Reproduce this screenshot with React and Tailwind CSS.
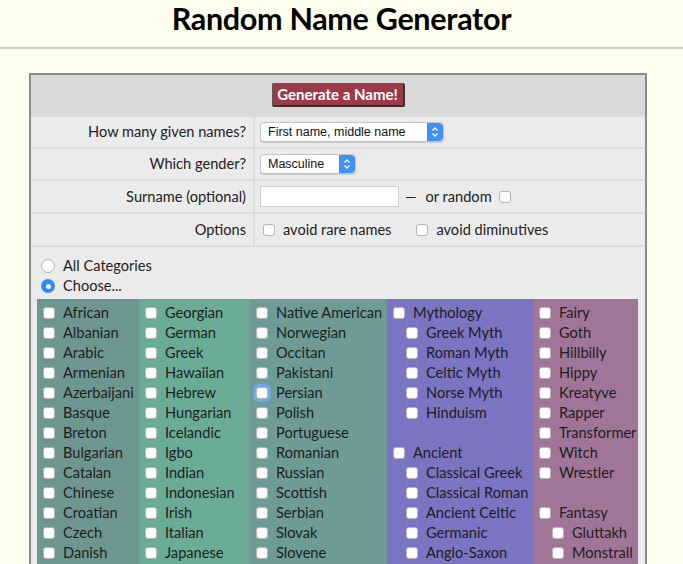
import React from 'react';

const COLUMNS = [
  {
    bg: 'bg-[#6d9691]',
    w: 'w-[102px]',
    items: ['African', 'Albanian', 'Arabic', 'Armenian', 'Azerbaijani', 'Basque', 'Breton', 'Bulgarian', 'Catalan', 'Chinese', 'Croatian', 'Czech', 'Danish'],
  },
  {
    bg: 'bg-[#6aab96]',
    w: 'w-[111px]',
    items: ['Georgian', 'German', 'Greek', 'Hawaiian', 'Hebrew', 'Hungarian', 'Icelandic', 'Igbo', 'Indian', 'Indonesian', 'Irish', 'Italian', 'Japanese'],
  },
  {
    bg: 'bg-[#6f9b97]',
    w: 'w-[137px]',
    items: ['Native American', 'Norwegian', 'Occitan', 'Pakistani', '*Persian', 'Polish', 'Portuguese', 'Romanian', 'Russian', 'Scottish', 'Serbian', 'Slovak', 'Slovene'],
  },
  {
    bg: 'bg-[#7a74c2]',
    w: 'w-[146px]',
    items: ['Mythology', '>Greek Myth', '>Roman Myth', '>Celtic Myth', '>Norse Myth', '>Hinduism', '', 'Ancient', '>Classical Greek', '>Classical Roman', '>Ancient Celtic', '>Germanic', '>Anglo-Saxon'],
  },
  {
    bg: 'bg-[#a07598]',
    w: 'w-[105px]',
    items: ['Fairy', 'Goth', 'Hillbilly', 'Hippy', 'Kreatyve', 'Rapper', 'Transformer', 'Witch', 'Wrestler', '', 'Fantasy', '>Gluttakh', '>Monstrall'],
  },
];

function Box({ focus }) {
  return (
    <span
      className={`inline-block shrink-0 w-[12px] h-[12px] rounded-[3px] bg-white border border-[#b5b5b5] ${
        focus ? 'ring-[3px] ring-[#6fa9e6]' : ''
      }`}
    />
  );
}

function Select({ label, w }) {
  return (
    <div className={`${w} h-[20px] flex items-center bg-white rounded-[4px] border border-[#c4c4c4] shadow-[0_1px_1px_rgba(0,0,0,0.15)] overflow-hidden`}>
      <span className="flex-1 pl-[7px] text-[12.5px] text-[#111] font-['Liberation_Sans',sans-serif]">{label}</span>
      <span className="w-[16px] h-full bg-[#3f8ff5] flex items-center justify-center rounded-r-[4px]">
        <svg width="8" height="12" viewBox="0 0 8 12" fill="none" stroke="white" strokeWidth="1.4">
          <path d="M1.5 4.5 L4 2 L6.5 4.5" />
          <path d="M1.5 7.5 L4 10 L6.5 7.5" />
        </svg>
      </span>
    </div>
  );
}

function Row({ label, h = 'h-[30px]', children }) {
  return (
    <div className={`flex gap-[2px] ${h}`}>
      <div className="w-[222px] bg-[#ebebeb] flex items-center justify-end pr-[7px]">{label}</div>
      <div className="flex-1 bg-[#ebebeb] flex items-center pl-[5px]">{children}</div>
    </div>
  );
}

export default function App() {
  return (
    <div className="min-h-screen bg-[#ffffee] font-['Lato',sans-serif] text-[#222]">
      <header className="h-[49px] flex items-center justify-center border-b-2 border-[#cccccc]">
        <h1 className="text-[30.5px] leading-none font-bold text-black tracking-[-0.3px] -mt-[11px]">Random Name Generator</h1>
      </header>

      <div className="ml-[29px] mt-[24px] w-[618px] border-2 border-[#8a8a8a] bg-[#dcdcdc] flex flex-col gap-[2px] text-[14.6px]">
        <div className="h-[40px] bg-[#d9d9d9] flex items-center justify-center">
          <button className="w-[133px] h-[24px] bg-[#9d3a4a] text-white font-bold text-[15px] rounded-[2px] border border-[#555] border-r-2 border-b-2 border-r-[#333] border-b-[#333] leading-none">
            Generate a Name!
          </button>
        </div>

        <Row label="How many given names?">
          <Select label="First name, middle name" w="w-[184px]" />
        </Row>
        <Row label="Which gender?">
          <Select label="Masculine" w="w-[96px]" />
        </Row>
        <Row label="Surname (optional)" h="h-[31px]">
          <span className="w-[139px] h-[21px] bg-white border border-[#d0d0d0]" />
          <span className="ml-[6px]">—</span>
          <span className="ml-[9px]">or random</span>
          <span className="ml-[7px] flex"><Box /></span>
        </Row>
        <div className="flex gap-[2px] h-[31px]">
          <div className="w-[222px] bg-[#ebebeb] flex items-center justify-end pr-[7px]">Options</div>
          <div className="flex-1 bg-[#ebebeb] flex items-center pl-[8px]">
            <Box />
            <span className="ml-[8px]">avoid rare names</span>
            <span className="ml-[25px] flex"><Box /></span>
            <span className="ml-[8px]">avoid diminutives</span>
          </div>
        </div>

        <div className="bg-[#ebebeb] pt-[9px] pl-[6px] pr-[7px] pb-[20px]">
          <div className="pl-[4px] flex flex-col">
            <label className="h-[20px] flex items-center gap-[8px]">
              <span className="w-[14px] h-[14px] rounded-full bg-white border border-[#b0b0b0]" />
              All Categories
            </label>
            <label className="h-[20px] flex items-center gap-[8px]">
              <span className="w-[14px] h-[14px] rounded-full bg-[#2f8ef5] flex items-center justify-center">
                <span className="w-[5px] h-[5px] rounded-full bg-white" />
              </span>
              Choose...
            </label>
          </div>
          <div className="flex mt-[3px]">
            {COLUMNS.map((col, i) => (
              <div key={i} className={`${col.bg} ${col.w} pt-[4px] pb-[10px] pl-[6px] flex flex-col`}>
                {col.items.map((item, j) => {
                  if (!item) return <div key={j} className="h-[20px]" />;
                  const sub = item.startsWith('>');
                  const focus = item.startsWith('*');
                  const text = item.replace(/^[>*]/, '');
                  return (
                    <div key={j} className={`h-[20px] flex items-center gap-[8px] whitespace-nowrap ${sub ? 'pl-[13px]' : ''}`}>
                      <Box focus={focus} />
                      <span className="text-[#1d1d1d]">{text}</span>
                    </div>
                  );
                })}
              </div>
            ))}
          </div>
        </div>
      </div>
    </div>
  );
}
